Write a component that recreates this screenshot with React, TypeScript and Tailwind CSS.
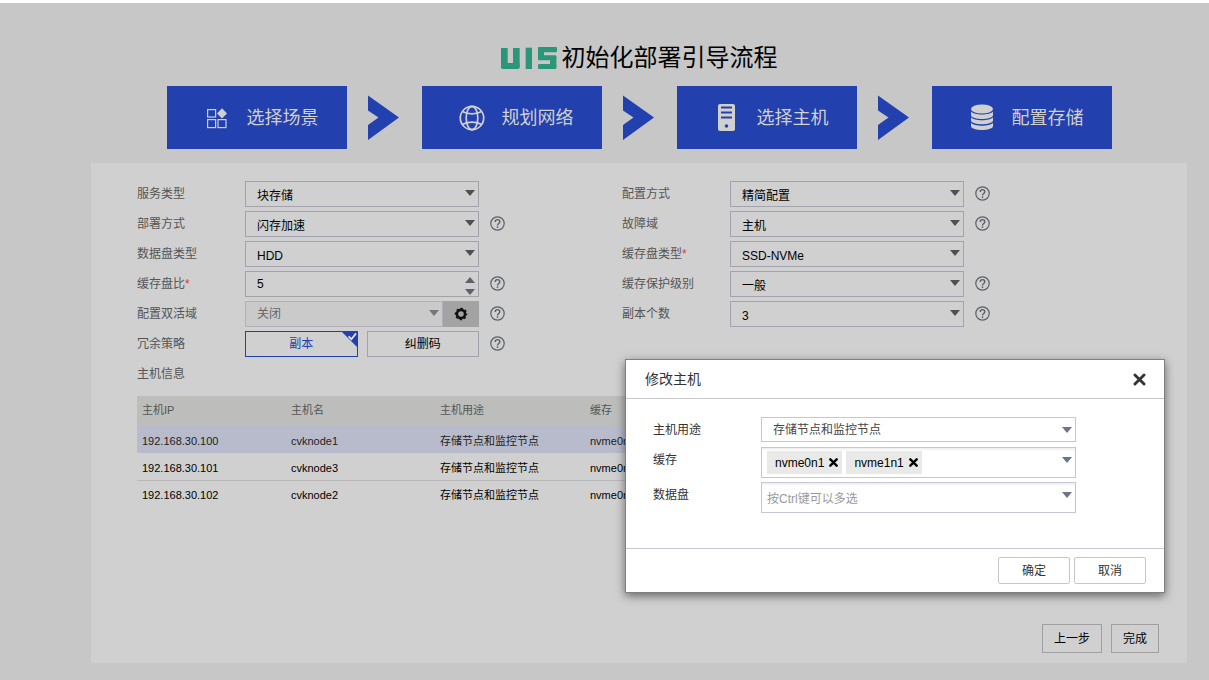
import { useId, useState } from "react";
import clsx from "clsx";

const hosts = [
  { ip: "192.168.30.100", name: "cvknode1", usage: "存储节点和监控节点", cache: "nvme0n1" },
  { ip: "192.168.30.101", name: "cvknode3", usage: "存储节点和监控节点", cache: "nvme0n1" },
  { ip: "192.168.30.102", name: "cvknode2", usage: "存储节点和监控节点", cache: "nvme0n1" },
];

const steps = [
  { title: "选择场景", icon: <SceneIcon /> },
  { title: "规划网络", icon: <GlobeIcon /> },
  { title: "选择主机", icon: <ServerIcon /> },
  { title: "配置存储", icon: <DatabaseIcon /> },
];

function SceneIcon() {
  return (
    <svg width="22" height="22" viewBox="0 0 22 22" fill="none" stroke="currentColor" strokeWidth="1.2">
      <rect x="1.6" y="2.6" width="8" height="7.4" />
      <rect x="1.6" y="12.6" width="8" height="8" />
      <rect x="12" y="12.6" width="8" height="8" />
      <path d="M16 1.2l5 5.200-5 5.200-5-5.200z" fill="currentColor" stroke="none" />
    </svg>
  );
}

function GlobeIcon() {
  return (
    <svg width="26" height="26" viewBox="0 0 26 26" fill="none" stroke="currentColor" strokeWidth="1.7">
      <circle cx="13" cy="13" r="11.7" />
      <ellipse cx="13" cy="13" rx="5.8" ry="11.7" />
      <path d="M3.200 6.600q9.800 4.600 19.600 0M3.200 19.400q9.800-4.600 19.600 0" />
    </svg>
  );
}

function ServerIcon() {
  return (
    <svg width="17" height="27" viewBox="0 0 17 27">
      <rect width="17" height="27" rx="2" fill="currentColor" />
      <path d="M3 3.5h11M3 8.5h11M3 13.5h11" stroke="#2240ae" strokeWidth="2" />
      <circle cx="8.5" cy="22" r="1.8" fill="#2240ae" />
    </svg>
  );
}

function DatabaseIcon() {
  return (
    <svg width="24" height="27" viewBox="0 0 24 27" fill="currentColor">
      <ellipse cx="12" cy="5" rx="11" ry="4.6" />
      <path d="M1 7.6c3 4 19 4 22 0v3.6c-1 5-21 5-22 0z" />
      <path d="M1 13.2c3 4 19 4 22 0v3.4c-1 5-21 5-22 0z" />
      <path d="M1 18.8c3 4 19 4 22 0v3.4c-1 5-21 5-22 0z" />
    </svg>
  );
}

function Logo() {
  return (
    <svg width="56" height="22" viewBox="0 0 168 66" fill="#2c9678" role="img" aria-label="UIS">
      <rect x="0" y="3" width="20" height="56" />
      <rect x="36" y="3" width="20" height="56" />
      <rect x="0" y="48" width="56" height="18" rx="5" />
      <rect x="74" y="2" width="19" height="64" />
      <rect x="111" y="0" width="57" height="16" rx="3" />
      <rect x="111" y="4" width="18" height="32" />
      <rect x="111" y="25" width="55" height="15" rx="3" />
      <rect x="147" y="30" width="19" height="32" />
      <rect x="111" y="51" width="55" height="15" rx="4" />
    </svg>
  );
}

function Caret({ className }: { className?: string }) {
  return (
    <svg width="10" height="6" viewBox="0 0 10 6" fill="currentColor" className={className} aria-hidden="true">
      <path d="M0 0h10L5 6z" />
    </svg>
  );
}

function Cross({ size, width }: { size: number; width: number }) {
  return (
    <svg width={size} height={size} viewBox="0 0 12 12" stroke="currentColor" strokeWidth={width} strokeLinecap="round">
      <path d="M1.8 1.8l8.4 8.4M10.2 1.8l-8.4 8.4" />
    </svg>
  );
}

function Help() {
  return (
    <button type="button" aria-label="帮助" className="mb-[2px] ml-[11px] text-[#5b6068]">
      <svg width="15" height="15" viewBox="0 0 15 15" fill="none" stroke="currentColor" strokeWidth="1.2">
        <circle cx="7.5" cy="7.5" r="6.7" />
        <path d="M5.2 6c0-3.1 4.6-3.1 4.6-.3 0 1.7-2.3 1.8-2.3 3.7" strokeWidth="1.4" />
        <path d="M7.5 10.4v1.5" strokeWidth="1.5" />
      </svg>
    </button>
  );
}

interface FieldProps {
  label: string;
  id?: string;
  required?: boolean;
  help?: boolean;
  children?: React.ReactNode;
}

function Field({ label, id, required, help, children }: FieldProps) {
  return (
    <div className="flex h-[26px] items-center">
      <label htmlFor={id} className="w-[108px] shrink-0 text-[#555]">
        {label}
        {required && <span className="text-[#e0362c]">*</span>}
      </label>
      {children}
      {help && <Help />}
    </div>
  );
}

function SelectField({ label, value, required, help }: { label: string; value: string; required?: boolean; help?: boolean }) {
  const id = useId();
  return (
    <Field label={label} id={id} required={required} help={help}>
      <div className="relative w-[234px]">
        <select id={id} className="h-[26px] w-full appearance-none border border-[#a3a3af] px-[11px] pt-[3px] text-black">
          <option>{value}</option>
        </select>
        <Caret className="pointer-events-none absolute top-[9px] right-1 text-[#505050]" />
      </div>
    </Field>
  );
}

function RatioField() {
  const [ratio, setRatio] = useState(5);
  return (
    <Field label="缓存盘比" id="ratio" required help>
      <div className="relative w-[234px]">
        <input
          id="ratio"
          type="text"
          inputMode="numeric"
          value={ratio}
          onChange={(e) => setRatio(Number(e.target.value) || 0)}
          className="h-[26px] w-full border border-[#a3a3a3] px-[11px] text-black"
        />
        <div className="absolute top-[6px] right-1 flex flex-col gap-[6px] text-[#5b626b]">
          <button type="button" aria-label="增加" onClick={() => setRatio(ratio + 1)}>
            <Caret className="rotate-180" />
          </button>
          <button type="button" aria-label="减少" onClick={() => setRatio(ratio - 1)}>
            <Caret />
          </button>
        </div>
      </div>
    </Field>
  );
}

function ActiveDomainField() {
  return (
    <Field label="配置双活域" id="domain" help>
      <div className="flex w-[234px]">
        <div className="relative flex-1">
          <select
            id="domain"
            disabled
            className="h-[26px] w-full appearance-none border border-[#b0b0bc] bg-[#cacaca] px-[11px] text-[#666] opacity-100"
          >
            <option>关闭</option>
          </select>
          <Caret className="pointer-events-none absolute top-[9px] right-1 text-[#777]" />
        </div>
        <button type="button" aria-label="设置" className="flex w-9 items-center justify-center bg-[#a3a3a3] text-[#111]">
          <svg width="14" height="14" viewBox="0 0 14 14" fill="none" stroke="currentColor">
            <circle cx="7" cy="7" r="4.1" strokeWidth="2.6" />
            <circle cx="7" cy="7" r="5.5" strokeWidth="1.5" strokeDasharray="2.2 2.12" strokeDashoffset="1.1" />
          </svg>
        </button>
      </div>
    </Field>
  );
}

function PolicyField() {
  const [policy, setPolicy] = useState("副本");
  return (
    <Field label="冗余策略" help>
      <div className="flex w-[234px] gap-[9px]">
        {["副本", "纠删码"].map((item) => (
          <button
            key={item}
            type="button"
            onClick={() => setPolicy(item)}
            className={clsx(
              "relative h-[26px] flex-1 border",
              policy === item ? "border-[#2240ae] text-[#2240ae]" : "border-[#a3a3af] text-black"
            )}
          >
            {item}
            {policy === item && (
              <svg width="17" height="17" viewBox="0 0 17 17" className="absolute -top-px -right-px">
                <path d="M0 0h17v17z" fill="#2240ae" />
                <path d="M7.6 5.4l2.8 2.8 4.6-5.8" fill="none" stroke="#e4e4e4" strokeWidth="1.8" />
              </svg>
            )}
          </button>
        ))}
      </div>
    </Field>
  );
}

function HostTable() {
  return (
    <table className="mt-[9px] w-full table-fixed text-left text-[11px]">
      <thead>
        <tr className="h-[30px] bg-[#bdbebb] text-[#555]">
          <th className="w-[149px] px-[5px] pb-[2px] font-normal">主机IP</th>
          <th className="w-[149px] px-[5px] pb-[2px] font-normal">主机名</th>
          <th className="w-[150px] px-[5px] pb-[2px] font-normal">主机用途</th>
          <th className="px-[5px] pb-[2px] font-normal">缓存</th>
        </tr>
      </thead>
      <tbody>
        {hosts.map((host, i) => (
          <tr
            key={host.ip}
            className={clsx("h-[27px]", i === 0 && "bg-[#b8bbcb] text-[#222]", i === 1 && "border-b border-[#b8b8b8]")}
          >
            <td className="px-[5px] pt-1">{host.ip}</td>
            <td className="px-[5px] pt-1">{host.name}</td>
            <td className="px-[5px] pt-1">{host.usage}</td>
            <td className="px-[5px] pt-1">{host.cache}</td>
          </tr>
        ))}
      </tbody>
    </table>
  );
}

function DialogRow({ label, id, children }: { label: string; id: string; children: React.ReactNode }) {
  return (
    <div className="flex">
      <label htmlFor={id} className="w-[108px] shrink-0 leading-[26px]">
        {label}
      </label>
      <div className="relative w-[315px]">
        {children}
        <Caret className="pointer-events-none absolute top-[10px] right-1 text-[#6b7585]" />
      </div>
    </div>
  );
}

function EditHostDialog() {
  const [disks, setDisks] = useState(["nvme0n1", "nvme1n1"]);
  return (
    <div
      role="dialog"
      aria-labelledby="dialog-title"
      className="absolute top-[356px] right-[44px] w-[540px] border border-[#808080] bg-white text-[#333] shadow-[0_3px_9px_rgba(0,0,0,0.5)]"
    >
      <div className="flex h-[39px] items-center justify-between border-b border-[#c8c8cc] pr-[18px] pl-[19px]">
        <h2 id="dialog-title" className="text-sm">
          修改主机
        </h2>
        <button type="button" aria-label="关闭">
          <Cross size={13} width={2.6} />
        </button>
      </div>
      <div className="flex flex-col gap-1 pt-[18px] pb-[35px] pl-[27px]">
        <DialogRow label="主机用途" id="usage">
          <select id="usage" className="block h-[25px] w-full appearance-none border border-[#c8c6d6] px-[11px] text-[#444]">
            <option>存储节点和监控节点</option>
          </select>
        </DialogRow>
        <DialogRow label="缓存" id="cache">
          <div className="flex h-[31px] items-center gap-1 border border-[#c8c6d6] px-[5px] shadow-[inset_0_2px_2px_rgba(0,0,0,0.06)]">
            {disks.map((disk) => (
              <span key={disk} className="flex h-[23px] items-center gap-[5px] bg-[#e9e9e7] pr-1 pl-2 text-black">
                {disk}
                <button type="button" aria-label={"移除 " + disk} onClick={() => setDisks(disks.filter((d) => d !== disk))}>
                  <Cross size={9} width={3.2} />
                </button>
              </span>
            ))}
            <input id="cache" className="w-0 flex-1 outline-none" />
          </div>
        </DialogRow>
        <DialogRow label="数据盘" id="data">
          <input
            id="data"
            placeholder="按Ctrl键可以多选"
            className="block h-[31px] w-full border border-[#c8c6d6] px-[5px] pt-[2px] shadow-[inset_0_2px_2px_rgba(0,0,0,0.06)] placeholder:text-[#999]"
          />
        </DialogRow>
      </div>
      <div className="flex justify-end gap-1 border-t border-[#c8c6d6] py-2 pr-[18px]">
        <button type="button" className="h-[27px] w-[72px] rounded-xs border border-[#c8c8cc]">
          确定
        </button>
        <button type="button" className="h-[27px] w-[72px] rounded-xs border border-[#c8c8cc]">
          取消
        </button>
      </div>
    </div>
  );
}

export default function App() {
  return (
    <div className="relative flex min-h-screen flex-col border-t-[3px] border-white bg-[#c7c7c7] pt-[37px] pr-[22px] pb-[17px] pl-[91px] font-['Liberation_Sans','Noto_Sans_CJK_SC',sans-serif] text-xs text-black">
      <h1 className="mb-[10px] flex items-center justify-center gap-[5px] text-2xl leading-9">
        <Logo />
        初始化部署引导流程
      </h1>

      <ol className="flex justify-center">
        {steps.map((step, i) => (
          <li key={step.title} className="flex items-center">
            {i > 0 && (
              <svg width="31" height="46" viewBox="0 0 31 46" fill="#2240ae" className="mr-[23px] ml-[21px]">
                <path d="M0 .5L31 22.500 0 45V30L10.500 22.500 0 15.500z" />
              </svg>
            )}
            <div className="flex h-[63px] w-[180px] items-center gap-[15px] bg-[#2240ae] pl-[35px] text-lg text-[#d0d0d0]">
              <span className="flex w-[30px] justify-center">{step.icon}</span>
              {step.title}
            </div>
          </li>
        ))}
      </ol>

      <main className="mt-[14px] flex flex-1 flex-col bg-[#d0d0d0] px-[46px] pt-[18px] pb-[10px]">
        <div className="flex">
          <div className="flex w-[485px] flex-col gap-1">
            <SelectField label="服务类型" value="块存储" />
            <SelectField label="部署方式" value="闪存加速" help />
            <SelectField label="数据盘类型" value="HDD" />
            <RatioField />
            <ActiveDomainField />
            <PolicyField />
            <p className="leading-[26px] text-[#555]">主机信息</p>
          </div>
          <div className="flex flex-col gap-1">
            <SelectField label="配置方式" value="精简配置" help />
            <SelectField label="故障域" value="主机" help />
            <SelectField label="缓存盘类型" value="SSD-NVMe" required />
            <SelectField label="缓存保护级别" value="一般" help />
            <SelectField label="副本个数" value="3" help />
          </div>
        </div>

        <HostTable />

        <div className="-mr-[18px] mt-auto flex justify-end gap-[9px]">
          <button type="button" className="h-[29px] border border-[#a0a0a0] px-[11px]">
            上一步
          </button>
          <button type="button" className="h-[29px] border border-[#a0a0a0] px-[11px]">
            完成
          </button>
        </div>
      </main>

      <EditHostDialog />
    </div>
  );
}
